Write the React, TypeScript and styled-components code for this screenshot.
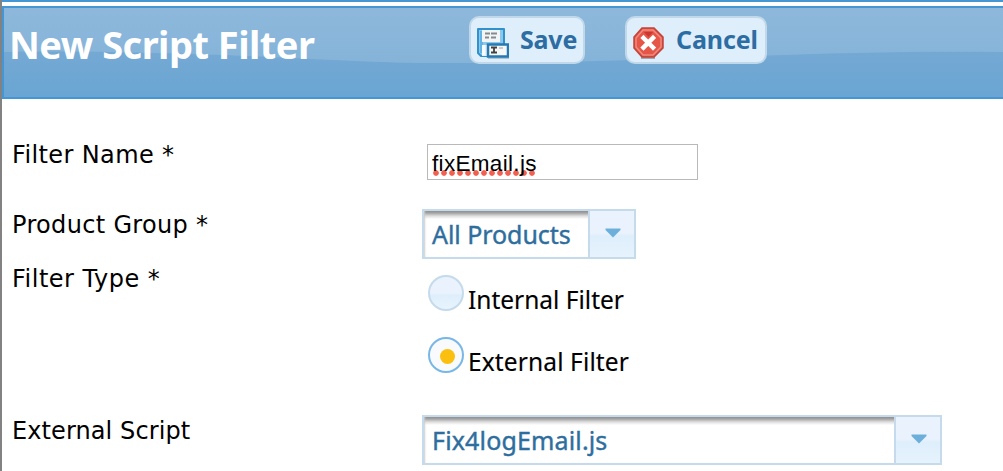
import React from "react";
import styled, { createGlobalStyle } from "styled-components";

const GlobalStyle = createGlobalStyle`
  * { box-sizing: border-box; }
  html, body { margin: 0; padding: 0; background: #fff; overflow: hidden; }
`;

const Page = styled.div`
  width: 100%;
  height: 471px;
  overflow: hidden;
  border-left: 2px solid #828282;
  background: #fff;
`;

const TopRule = styled.div`
  height: 2px;
  margin-bottom: 4px;
  background: #4596d5;
`;

const Header = styled.header`
  position: relative;
  display: flex;
  align-items: flex-start;
  height: 93px;
  border: 2px solid #4596d5;
  border-right: 0;
  background: linear-gradient(#8db8db, #86b4d9 50px);
`;

const Wave = styled.svg`
  position: absolute;
  inset: 0;
  width: 100%;
  height: 100%;
`;

const Title = styled.h1`
  position: relative;
  width: 465px;
  margin: 0;
  padding: 10px 0 0 5px;
  font: bold 38px/52px "Noto Sans", sans-serif;
  letter-spacing: -0.52px;
  white-space: nowrap;
  color: #fff;
`;

const Button = styled.button<{ $width: number; $tracking: number }>`
  position: relative;
  display: flex;
  align-items: flex-start;
  width: ${(p) => p.$width}px;
  height: 48px;
  margin: 8px 40px 0 0;
  padding: 7px 0 0 6px;
  border: 2px solid #c1d8ea;
  border-radius: 10px;
  background: #dfeefb;
  color: #2c6da3;
  font: bold 25px/28px "Noto Sans", sans-serif;
  letter-spacing: ${(p) => p.$tracking}px;
  white-space: nowrap;

  svg { flex: none; margin: 2px 11px 0 0; }
`;

const Form = styled.form`
  padding: 41px 0 0 10px;
`;

const Row = styled.div<{ $height: number }>`
  display: grid;
  grid-template-columns: 410px 1fr;
  align-items: start;
  height: ${(p) => p.$height}px;
`;

const Label = styled.label<{ $top: number; $tracking?: number }>`
  padding-top: ${(p) => p.$top}px;
  font: 24px/28px "DejaVu Sans", sans-serif;
  letter-spacing: ${(p) => p.$tracking ?? 0}px;
  white-space: nowrap;
  color: #000;
`;

const TextField = styled.div`
  width: 271px;
  height: 36px;
  margin: 4px 0 0 5px;
  padding: 4px 0 0 4px;
  border: 1px solid #b9b9b9;
  font: 22.5px/29px "Liberation Sans", sans-serif;
  color: #000;
`;

const Misspelt = styled.span`
  display: inline-block;
  height: 27px;
  letter-spacing: 0.32px;
  background: radial-gradient(circle at 4px 3px, #f4604f 2.4px, transparent 3.2px) 0 100% / 8px 6px repeat-x;
`;

const Select = styled.div<{ $width: number }>`
  display: flex;
  width: ${(p) => p.$width}px;
  height: 50px;
  border: 2px solid #c5dbec;
`;

const SelectValue = styled.div<{ $tracking: number }>`
  flex: 1;
  padding: 8px 0 0 8px;
  background: linear-gradient(#8c8c8c, #a5a5a5 2px, #dedede 5px, #fff 8px);
  box-shadow: inset 2px 0 2px -1px #ccc;
  font: 25px/30px "Noto Sans", sans-serif;
  letter-spacing: ${(p) => p.$tracking}px;
  -webkit-text-stroke: 0.4px #2e6e9e;
  white-space: nowrap;
  color: #2e6e9e;
`;

const SelectArrow = styled.div`
  display: flex;
  justify-content: center;
  width: 46px;
  padding: 17px 0 0 2px;
  border-left: 2px solid #c5dbec;
  background: linear-gradient(#eaf3fd 0 22px, #deeefb 25px, #e6f3fd);
`;

const RadioGroup = styled.div`
  display: grid;
  gap: 26px;
  padding: 11px 0 0 6px;
`;

const RadioOption = styled.label<{ $tracking: number }>`
  display: flex;
  align-items: flex-start;
  height: 36px;
  gap: 4px;
  font: 24.5px/30px "Noto Sans", sans-serif;
  letter-spacing: ${(p) => p.$tracking}px;
  -webkit-text-stroke: 0.15px #000;
  white-space: nowrap;
  color: #000;

  span { margin-top: 10px; }
`;

const RadioMark = styled.i<{ $checked?: boolean }>`
  display: flex;
  align-items: center;
  justify-content: center;
  width: 36px;
  height: 36px;
  border: 2px solid ${(p) => (p.$checked ? "#79b7e7" : "#c5dbec")};
  border-radius: 50%;
  background: ${(p) => (p.$checked ? "#f8fafc" : "linear-gradient(#eaf3fd 0 16px, #deeefb 18px, #e8f4fd)")};

  &::after {
    content: "";
    width: 15px;
    height: 15px;
    margin: 2px 0 0 2px;
    border-radius: 50%;
    background: ${(p) => (p.$checked ? "#fbc00f" : "transparent")};
  }
`;

const SaveIcon = () => (
  <svg width="32" height="32" viewBox="0 0 32 32">
    <path d="M1 2h26v27H4l-3-3z" fill="#8cc8ec" stroke="#3191cd" strokeWidth="2" strokeLinejoin="round" />
    <path d="M3 4h3v22H3z" fill="#62b3e3" />
    <path d="M5 3h18v12H5z" fill="#f2f5f6" />
    <path d="M8 6.500h5m1 0h6M8 10.500h4m2 0h5" stroke="#858b8d" strokeWidth="2" />
    <path d="M5 18h10v11H5z" fill="#e4f1f7" />
    <path d="M5 18h3v10H5z" fill="#f8fbfc" />
    <path d="M11 31h21" stroke="#7f9aaa" />
    <path d="M11 17.500h20v12H11z" fill="#f6f7f7" stroke="#2679b1" strokeWidth="2.500" />
    <path d="M14 20.500h6m-3 0v5m-3 0h6" fill="none" stroke="#424242" strokeWidth="1.8" />
    <path d="M22 21h4" stroke="#c9cccd" strokeWidth="2" />
  </svg>
);

const CancelIcon = () => (
  <svg width="32" height="32" viewBox="0 0 32 32">
    <path d="M8 31h14" stroke="#87929b" strokeWidth="1.5" />
    <path d="M9 1h12l9 9v11l-9 9H9l-8-9V10z" fill="#d7564b" stroke="#c44339" strokeWidth="1.5" />
    <path d="M10 3h10l8 8v9l-8 8H10l-7-8v-9z" fill="#e55548" stroke="#f18b7e" strokeWidth="1.5" />
    <path d="M11 5h9l-4.500 5z" fill="#cb382f" />
    <path d="M10.500 11l9.500 9.500M20 11L10.500 20.500" stroke="#fff" strokeWidth="4.500" strokeLinecap="square" />
  </svg>
);

const Arrow = () => (
  <svg width="16" height="10" viewBox="0 0 16 10">
    <path d="M.5 .5h15v1.500L8 9.500.5 2z" fill="#6dafdb" />
  </svg>
);

export default function App() {
  return (
    <Page>
      <GlobalStyle />
      <TopRule />
      <Header>
        <Wave viewBox="0 0 999 89" preserveAspectRatio="none">
          <defs>
            <linearGradient id="lower" x1="0" y1="0" x2="0" y2="1">
              <stop offset="0" stopColor="#74a9d3" />
              <stop offset="1" stopColor="#6aa5d3" />
            </linearGradient>
          </defs>
          <path
            d="M0 44C60 43 120 44 185 46C300 49 365 56 455 55C560 55 660 51 755 48C825 45 910 43 999 44V89H0Z"
            fill="url(#lower)"
          />
        </Wave>
        <Title>New Script Filter</Title>
        <Button type="button" $width={116} $tracking={-0.2}>
          <SaveIcon />
          Save
        </Button>
        <Button type="button" $width={142} $tracking={-0.1}>
          <CancelIcon />
          Cancel
        </Button>
      </Header>
      <Form>
        <Row $height={69}>
          <Label $top={1} $tracking={0.38}>Filter Name *</Label>
          <TextField>
            <Misspelt>fixEmail.js</Misspelt>
          </TextField>
        </Row>
        <Row $height={55}>
          <Label $top={2} $tracking={0.33}>Product Group *</Label>
          <Select $width={214}>
            <SelectValue $tracking={-0.05}>All Products</SelectValue>
            <SelectArrow>
              <Arrow />
            </SelectArrow>
          </Select>
        </Row>
        <Row $height={151}>
          <Label as="div" $top={1} $tracking={0.5}>Filter Type *</Label>
          <RadioGroup>
            <RadioOption $tracking={0}>
              <RadioMark />
              <span>Internal Filter</span>
            </RadioOption>
            <RadioOption $tracking={0.13}>
              <RadioMark $checked />
              <span>External Filter</span>
            </RadioOption>
          </RadioGroup>
        </Row>
        <Row $height={56}>
          <Label $top={2} $tracking={0.1}>External Script</Label>
          <Select $width={520}>
            <SelectValue $tracking={0.15}>Fix4logEmail.js</SelectValue>
            <SelectArrow>
              <Arrow />
            </SelectArrow>
          </Select>
        </Row>
      </Form>
    </Page>
  );
}
